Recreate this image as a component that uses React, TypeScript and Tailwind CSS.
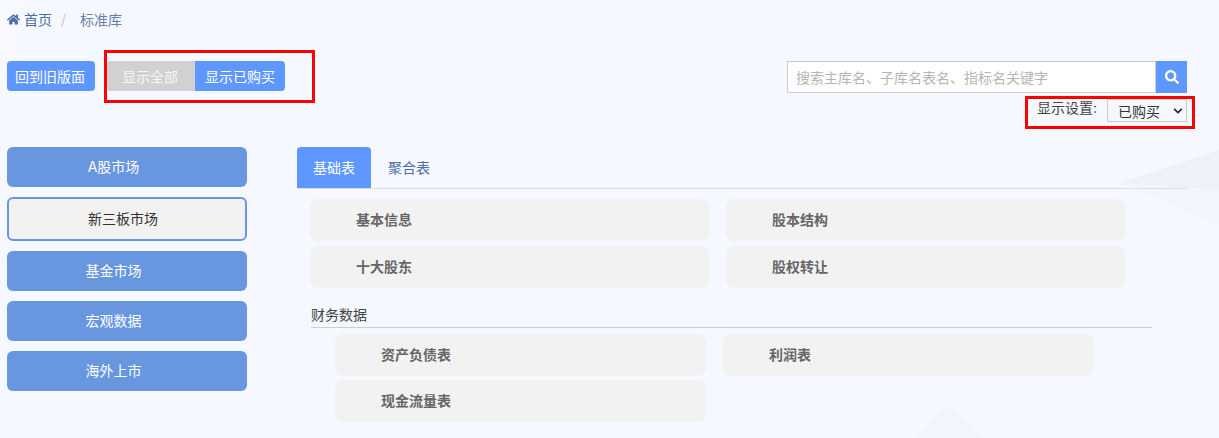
import { FaChevronDown, FaHome, FaSearch } from 'react-icons/fa';

const FONT = "font-['Inter','Noto_Sans_CJK_SC',sans-serif]";

const markets = ['A股市场', '新三板市场', '基金市场', '宏观数据', '海外上市'];

function Card({ label, className }: { label: string; className: string }) {
  return (
    <div className={`h-[42px] rounded-lg bg-[#f2f2f2] flex items-center pb-[2px] text-[14px] font-bold text-[#666] ${className}`}>
      {label}
    </div>
  );
}

export default function App() {
  return (
    <div className={`relative h-[438px] overflow-hidden bg-[#f5f8fe] text-[14px] ${FONT}`}>
      {/* faint background shapes */}
      <svg className="absolute inset-0 pointer-events-none" width="1219" height="438" viewBox="0 0 1219 438">
        <polygon points="1219,150 1120,183 1219,190" fill="#eef1f7" />
        <polygon points="1120,183 1219,190 1219,225" fill="#f2f5fb" />
        <polygon points="915,438 950,405 985,438" fill="#f2f5fb" />
        <polygon points="0,130 0,0 30,0" fill="#f7f9ff" />
      </svg>

      <div className="relative">
        {/* Breadcrumb */}
        <div className="h-[40px] pl-[7px] pb-[2px] flex items-center text-[#4a6da7]">
          <FaHome size={13} color="#4a6da7" />
          <span className="ml-[4px]">首页</span>
          <span className="ml-[9px] text-[#ccc]">/</span>
          <span className="ml-[14px] text-[#6b7fa8]">标准库</span>
        </div>

        {/* Toolbar */}
        <div className="mt-[10px] flex justify-between pl-[7px] pr-[32px]">
          <div className="flex items-start">
            <button className="mt-[11px] w-[88px] h-[30px] pr-[2px] rounded bg-[#5e97ff] text-white">回到旧版面</button>
            <div className="ml-[9px] w-[211px] h-[53px] border-[3px] border-[#ff0000] pt-[8px] flex items-start">
              <button className="w-[88px] h-[30px] pr-[2px] rounded-l bg-[#d1d1d1] text-[#f5f5f5]">显示全部</button>
              <button className="w-[90px] h-[30px] rounded-r bg-[#5e97ff] text-white">显示已购买</button>
            </div>
          </div>

          <div className="mt-[11px] flex flex-col items-end">
            <div className="flex w-[400px] h-[32px]">
              <div className="flex-1 border border-[#ccc] bg-white flex items-center pl-[8px] text-[#b5b5b5]">
                搜索主库名、子库名表名、指标名关键字
              </div>
              <div className="w-[31px] bg-[#5e97ff] flex items-center justify-center">
                <FaSearch size={14} color="white" />
              </div>
            </div>
            <div className="mt-[3px] -mr-[8px] w-[170px] h-[33px] border-[3px] border-[#ff0000] flex items-start justify-between pl-[9px] pr-[5px]">
              <span className="text-[#444] leading-[20px] -mt-[1px]">显示设置:</span>
              <div className="w-[80px] h-[23px] pt-[1px] border border-[#ccc] bg-[#f5f8fe] flex items-center justify-between pl-[10px] pr-[3px] text-[#333]">
                已购买
                <FaChevronDown size={10} color="#222" />
              </div>
            </div>
          </div>
        </div>

        {/* Main */}
        <div className="mt-[18px] flex pl-[7px]">
          <div className="w-[240px] flex flex-col gap-[10px]">
            {markets.map((m, i) =>
              i === 1 ? (
                <div key={m} className="h-[44px] pr-[8px] pb-[2px] rounded-md border-2 border-[#6897e0] bg-[#f2f2f2] flex items-center justify-center text-[#333]">
                  {m}
                </div>
              ) : (
                <div key={m} className="h-[40px] pr-[27px] pb-[2px] rounded-md bg-[#6897e0] flex items-center justify-center text-white">
                  {m}
                </div>
              ),
            )}
          </div>

          <div className="ml-[50px] w-[890px]">
            <div className="h-[42px] flex border-b border-[#ddd]">
              <div className="w-[74px] rounded-t bg-[#5e97ff] text-white flex items-center justify-center">基础表</div>
              <div className="w-[74px] pl-[2px] text-[#4a6da7] flex items-center justify-center">聚合表</div>
            </div>

            <div className="mt-[10px] ml-[13px] grid grid-cols-[399px_399px] gap-x-[17px] gap-y-[5px]">
              <Card label="基本信息" className="pl-[46px]" />
              <Card label="股本结构" className="pl-[46px]" />
              <Card label="十大股东" className="pl-[46px]" />
              <Card label="股权转让" className="pl-[46px]" />
            </div>

            <div className="mt-[18px] ml-[14px] w-[841px] h-[22px] border-b border-[#c8ced6] text-[#444] leading-[18px]">财务数据</div>

            <div className="mt-[6px] ml-[38px] grid grid-cols-[371px_371px] gap-x-[17px] gap-y-[4px]">
              <Card label="资产负债表" className="pl-[46px]" />
              <Card label="利润表" className="pl-[46px]" />
              <Card label="现金流量表" className="pl-[46px]" />
            </div>
          </div>
        </div>
      </div>
    </div>
  );
}
